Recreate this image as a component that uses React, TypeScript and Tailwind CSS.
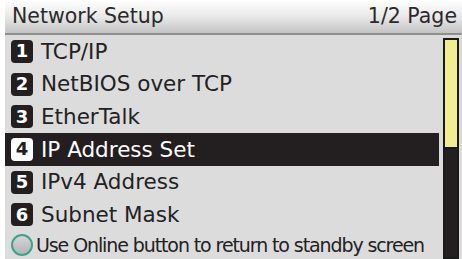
import React from 'react';

const items = [
  { n: 1, label: 'TCP/IP' },
  { n: 2, label: 'NetBIOS over TCP' },
  { n: 3, label: 'EtherTalk' },
  { n: 4, label: 'IP Address Set', active: true },
  { n: 5, label: 'IPv4 Address' },
  { n: 6, label: 'Subnet Mask' },
];

export default function App() {
  return (
    <div
      className="w-[462px] h-[259px] bg-white pl-[5px] overflow-hidden"
      style={{ fontFamily: '"DejaVu Sans", Verdana, sans-serif' }}
    >
      <div className="relative h-full bg-[#dcdcdd] flex flex-col">
        {/* Header */}
        <div className="h-[35px] shrink-0 flex items-center justify-between pl-[7px] pr-[5px] bg-gradient-to-b from-[#ffffff] via-[#e9e9e9] to-[#c4c4c4] border-b-2 border-[#8f8f8f] text-[#2a2a2a] text-[20.5px] leading-none">
          <span>Network Setup</span>
          <span>1/2 Page</span>
        </div>

        {/* Menu rows */}
        <div className="flex flex-col pr-[23px]">
          {items.map((it) => (
            <div
              key={it.n}
              className={
                'h-[32.7px] flex items-center pl-[6px] gap-[8px] ' +
                (it.active ? 'bg-[#231f20] text-white' : 'text-[#222222]')
              }
            >
              <span
                className={
                  'w-[22px] h-[23px] rounded-[4px] flex items-center justify-center text-[18px] font-bold leading-none ' +
                  (it.active ? 'bg-white text-[#231f20]' : 'bg-[#231f20] text-white')
                }
              >
                {it.n}
              </span>
              <span className="text-[21.5px] leading-none">{it.label}</span>
            </div>
          ))}
        </div>

        {/* Footer */}
        <div className="flex-1 flex items-center gap-[3px] pl-[6px]">
          <span className="w-[22px] h-[22px] rounded-full border-2 border-[#3aa58a] bg-gradient-to-b from-[#d6d6d6] to-[#b4b4b4]" />
          <span className="text-[19px] leading-none text-[#222222] tracking-[-1.1px]">
            Use Online button to return to standby screen
          </span>
        </div>

        {/* Scrollbar */}
        <div className="absolute left-[438px] top-[38px] bottom-0 w-[16px] border-2 border-[#1a1a1a] bg-[#231f20] flex flex-col">
          <div className="h-[109px] bg-[#f0ee8f] border-b-2 border-[#1a1a1a]" />
        </div>
      </div>
    </div>
  );
}
